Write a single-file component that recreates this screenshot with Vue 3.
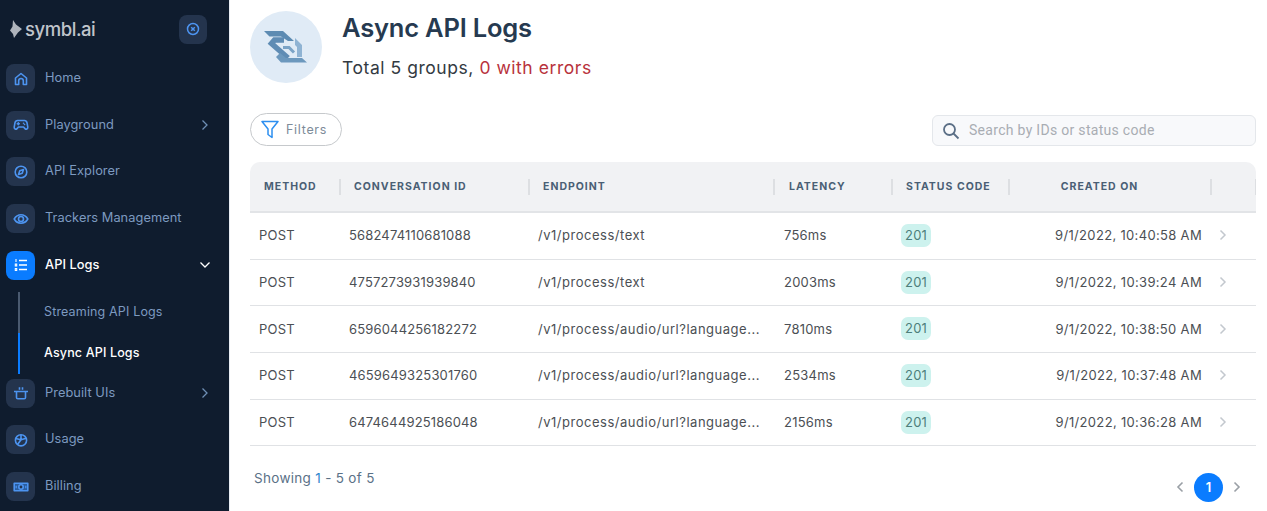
<script setup>
const nav1 = [
  { label: 'Home', icon: 'home' },
  { label: 'Playground', icon: 'game', chevron: true },
  { label: 'API Explorer', icon: 'compass' },
  { label: 'Trackers Management', icon: 'eye' }
]
const nav2 = [
  { label: 'Prebuilt UIs', icon: 'pot', chevron: true },
  { label: 'Usage', icon: 'pie' },
  { label: 'Billing', icon: 'money' }
]
const cols = ['METHOD', 'CONVERSATION ID', 'ENDPOINT', 'LATENCY', 'STATUS CODE', 'CREATED ON', '']
const longEp = '/v1/process/audio/url?language...'
const rows = [
  ['5682474110681088', '/v1/process/text', '756ms', '9/1/2022, 10:40:58 AM'],
  ['4757273931939840', '/v1/process/text', '2003ms', '9/1/2022, 10:39:24 AM'],
  ['6596044256182272', longEp, '7810ms', '9/1/2022, 10:38:50 AM'],
  ['4659649325301760', longEp, '2534ms', '9/1/2022, 10:37:48 AM'],
  ['6474644925186048', longEp, '2156ms', '9/1/2022, 10:36:28 AM']
]
</script>

<template>
  <div class="app">
    <aside class="side">
      <div class="brand">
        <div class="logo">
          <svg width="12" height="18" viewBox="0 0 12 18"><path d="M3 0 L6 4.500 L12 9 L8 12.500 L4 18 L3 14 L0 10.500 L2.500 6.500 Z" fill="#aeb3bb"/></svg>
          <span>symbl.ai</span>
        </div>
        <button class="collapse" aria-label="Collapse">
          <svg width="14" height="14" viewBox="0 0 14 14" fill="none" stroke="#4d94f0" stroke-width="1.500"><circle cx="7" cy="7" r="5.500"/><path d="M5.200 5.200l3.600 3.600M8.800 5.200L5.200 8.800"/></svg>
        </button>
      </div>

      <nav class="nav">
        <div v-for="n in nav1" :key="n.label" class="item">
          <span class="ibox">
            <svg width="16" height="16" viewBox="0 0 16 16" fill="none" stroke="#4d94f0" stroke-width="1.600" stroke-linejoin="round" stroke-linecap="round">
              <template v-if="n.icon === 'home'"><path d="M2.500 7L8 2.500 13.500 7v6.500h-3.200V9.800a2.300 2.300 0 0 0-4.600 0v3.700H2.500z"/></template>
              <template v-if="n.icon === 'game'"><path d="M4.500 3.500h7c1.500 0 2.200 1 2.500 2.200l.8 4.500c.3 1.700-1.700 2.600-2.800 1.400L10.500 10h-5L4 11.600c-1.100 1.200-3.100.3-2.800-1.400L2 5.700c.3-1.200 1-2.200 2.500-2.200z"/><path d="M5.300 5.800v2M4.300 6.800h2M10.500 6.300h.1M11.500 7.500h.1"/></template>
              <template v-if="n.icon === 'compass'"><circle cx="8" cy="8" r="5.800"/><path d="M10.500 5.500L9.200 9.200 5.500 10.500 6.800 6.800z"/></template>
              <template v-if="n.icon === 'eye'"><path d="M1.200 8C2.800 5.200 5.200 3.800 8 3.800s5.200 1.400 6.800 4.200c-1.600 2.800-4 4.200-6.800 4.200S2.800 10.800 1.200 8z"/><circle cx="8" cy="8" r="2.500"/></template>
            </svg>
          </span>
          <span class="lbl">{{ n.label }}</span>
          <svg v-if="n.chevron" class="chev" width="8" height="12" viewBox="0 0 8 12" fill="none" stroke="#6f8fb5" stroke-width="1.300"><path d="M1.500 1.500L6 6l-4.500 4.500"/></svg>
        </div>

        <div class="item active">
          <span class="ibox">
            <svg width="16" height="16" viewBox="0 0 16 16" fill="none" stroke="#fff" stroke-width="1.500"><path d="M6 3.500h8M6 8h8M6 12.500h8"/><path d="M3 2v3M2.300 7h1.400v2H2.300zM2.300 11.500h1.400v2H2.300z" stroke-width="1.100"/></svg>
          </span>
          <span class="lbl">API Logs</span>
          <svg class="chev down" width="12" height="8" viewBox="0 0 12 8" fill="none" stroke="#fff" stroke-width="1.300"><path d="M1.500 1.500L6 6l4.500-4.500"/></svg>
        </div>

        <div class="sub">
          <div class="subitem">Streaming API Logs</div>
          <div class="subitem on">Async API Logs</div>
        </div>

        <div v-for="n in nav2" :key="n.label" class="item">
          <span class="ibox">
            <svg width="16" height="16" viewBox="0 0 16 16" fill="none" stroke="#4d94f0" stroke-width="1.600" stroke-linejoin="round">
              <template v-if="n.icon === 'pot'"><path d="M3.500 6.500h9v6c0 .8-.5 1.300-1.300 1.300H4.800c-.8 0-1.300-.5-1.300-1.300zM1 6.500h14M6.500 2.200v2.500M9.500 2.200v2.500"/></template>
              <template v-if="n.icon === 'pie'"><circle cx="8" cy="8.300" r="5.600"/><path d="M8 2.700v5l5.200-1.500M8 7.700L4.500 12.500M8 7.700L2.700 6.500"/></template>
              <template v-if="n.icon === 'money'"><rect x="1.200" y="4.300" width="13.600" height="7.400" fill="#2a5d9e"/><circle cx="8" cy="8" r="2.200" fill="#24344d"/><path d="M3.200 6.800v2.400M12.800 6.800v2.400" stroke-width="1.200"/></template>
            </svg>
          </span>
          <span class="lbl">{{ n.label }}</span>
          <svg v-if="n.chevron" class="chev" width="8" height="12" viewBox="0 0 8 12" fill="none" stroke="#6f8fb5" stroke-width="1.300"><path d="M1.500 1.500L6 6l-4.500 4.500"/></svg>
        </div>
      </nav>
    </aside>

    <main class="main">
      <header class="head">
        <div class="disc">
          <svg width="72" height="72" viewBox="0 0 72 72" fill="none">
            <polygon points="14,20 33,20 44,30 38,30 31,25.500 19.500,25.500" fill="#5d8bb2"/>
            <path d="M34 29H24.500L21.500 32.500 38 47" stroke="#5f8cb4" stroke-width="5.500"/>
            <path d="M33 36.500h6l5 5" stroke="#7ba3c6" stroke-width="3"/>
            <polygon points="45,27 52,34 52,46 47,46 47,36 45,34" fill="#8fb3d3"/>
            <polygon points="26,46 31,51.500 57,51.500 52,47 36,47 30,42" fill="#6c98bd"/>
          </svg>
        </div>
        <div class="htext">
          <h1>Async API Logs</h1>
          <p>Total 5 groups, <span class="err">0 with errors</span></p>
        </div>
      </header>

      <div class="tools">
        <button class="filter">
          <svg width="18" height="19" viewBox="0 0 18 19" fill="none" stroke="#2d8ff0" stroke-width="1.500" stroke-linejoin="round"><path d="M1 1.500h16l-6 7.500v8.500l-4-3V9z"/></svg>
          <span>Filters</span>
        </button>
        <div class="search">
          <svg width="18" height="18" viewBox="0 0 18 18" fill="none" stroke="#5b6f86" stroke-width="1.800"><circle cx="7.500" cy="7.500" r="5.500"/><path d="M11.500 11.500L16.500 16.500"/></svg>
          <input placeholder="Search by IDs or status code" />
        </div>
      </div>

      <div class="table">
        <div class="thead">
          <div v-for="(c, i) in cols" :key="i" class="th" :class="'c' + i"><span>{{ c }}</span></div>
        </div>
        <div v-for="r in rows" :key="r[0]" class="tr">
          <div class="td c0">POST</div>
          <div class="td c1">{{ r[0] }}</div>
          <div class="td c2">{{ r[1] }}</div>
          <div class="td c3">{{ r[2] }}</div>
          <div class="td c4"><span class="badge">201</span></div>
          <div class="td c5">{{ r[3] }}</div>
          <div class="td c6">
            <svg width="8" height="12" viewBox="0 0 8 12" fill="none" stroke="#c3c8ce" stroke-width="1.500"><path d="M1.500 1.500L6 6l-4.500 4.500"/></svg>
          </div>
        </div>
      </div>

      <footer class="foot">
        <div class="showing">Showing <span class="blue">1</span> - 5 of 5</div>
        <div class="pager">
          <svg width="8" height="12" viewBox="0 0 8 12" fill="none" stroke="#9aa0a6" stroke-width="1.600"><path d="M6.500 1.500L2 6l4.500 4.500"/></svg>
          <span class="page">1</span>
          <svg width="8" height="12" viewBox="0 0 8 12" fill="none" stroke="#9aa0a6" stroke-width="1.600"><path d="M1.500 1.500L6 6l-4.500 4.500"/></svg>
        </div>
      </footer>
    </main>
  </div>
</template>

<style>
html, body { margin: 0; background: #fff; overflow: hidden; }
</style>

<style scoped>
.app { display: flex; height: 511px; overflow: hidden; font-family: Inter, "Liberation Sans", sans-serif; }
.side { width: 229px; flex: none; background: #0f1c2e; border-right: 1px solid #e8edf3; box-sizing: content-box; }
.brand { display: flex; align-items: center; justify-content: space-between; height: 64px; padding: 0 22px 6px 10px; box-sizing: border-box; }
.logo { display: flex; align-items: center; gap: 3px; color: #c0c4cb; font-size: 18.500px; font-weight: 500; letter-spacing: -.45px; }
.collapse { width: 28px; height: 29px; border: 0; border-radius: 8px; background: #24344d; display: flex; align-items: center; justify-content: center; padding: 0; }
.nav { display: flex; flex-direction: column; }
.item { height: 46.700px; display: flex; align-items: flex-start; padding-left: 6px; position: relative; }
.ibox { width: 29px; height: 29px; border-radius: 8px; background: #24344d; display: flex; align-items: center; justify-content: center; flex: none; }
.lbl { margin-left: 10px; line-height: 27px; font-size: 12.800px; letter-spacing: .06px; color: #7d9ac0; }
.chev { position: absolute; left: 201px; top: 8px; }
.chev.down { left: 199px; top: 10px; }
.item.active .ibox { background: #0a7cff; }
.item.active .lbl { color: #fff; font-weight: 500; }
.sub { height: 81.300px; margin-top: -5px; margin-bottom: 5px; position: relative; }
.subitem { height: 41px; border-left: 2px solid #4a5a70; margin-left: 18px; padding-left: 24px; line-height: 40px; font-size: 12.500px; letter-spacing: .15px; color: #7d9ac0; box-sizing: border-box; }
.subitem.on { color: #fff; border-left-color: #0a7cff; font-weight: 500; }

.main { flex: 1; min-width: 0; padding: 11px 11px 0 20px; }
.head { display: flex; gap: 20px; height: 72px; }
.disc { width: 72px; height: 72px; border-radius: 50%; background: #e0ebf6; }
.disc svg { display: block; }
h1 { margin: 0; font-size: 25.500px; line-height: 34px; font-weight: 600; color: #263a50; letter-spacing: -.2px; }
.htext p { margin: 10px 0 0; font-size: 17.500px; line-height: 26px; letter-spacing: .55px; color: #333a42; }
.err { color: #b8323c; }

.tools { display: flex; justify-content: space-between; align-items: flex-end; margin-top: 30px; height: 33px; }
.filter { width: 92px; height: 33px; border: 1px solid #c6c9cc; border-radius: 17px; background: #fff; display: flex; align-items: center; gap: 7px; padding: 0 0 0 10px; box-sizing: border-box; font: inherit; }
.filter span { font-size: 12.500px; letter-spacing: .7px; color: #7d8b99; }
.search { width: 324px; height: 31px; box-sizing: border-box; border: 1px solid #e4e7eb; border-radius: 6px; background: #f8f9fb; display: flex; align-items: center; padding-left: 9px; gap: 9px; }
.search input { flex: 1; min-width: 0; border: 0; background: transparent; outline: 0; padding: 0 0 2px; font-family: Roboto, sans-serif; font-size: 14px; letter-spacing: .3px; }
.search input::placeholder { color: #a9adb3; opacity: 1; }

.table { margin-top: 16px; }
.thead, .tr { display: grid; grid-template-columns: 90px 189px 245px 118px 117px 202px 45px; }
.thead { height: 51px; background: #f1f2f4; border-radius: 10px 10px 0 0; border-bottom: 2px solid #e2e4e7; box-sizing: border-box; align-items: center; }
.th { height: 16px; display: flex; align-items: center; padding-left: 14px; margin-right: -1px; border-right: 2px solid #dddfe2; box-sizing: border-box; font-size: 10.500px; font-weight: 700; letter-spacing: 1px; color: #4a5f75; white-space: nowrap; }
.th.c3 { padding-left: 15px; }
.th.c5 { justify-content: center; padding: 0 20px 0 0; }
.th.c6 { border-right-width: 1px; margin-right: 0; }
.tr { height: 46.700px; border-bottom: 1px solid #e0e2e5; box-sizing: border-box; align-items: center; }
.td { padding-left: 9px; font-size: 13px; letter-spacing: .22px; color: #4b4f54; white-space: nowrap; margin-top: -1px; }
.td.c1 { letter-spacing: .16px; }
.td.c2 { letter-spacing: .52px; }
.td.c3 { padding-left: 10px; }
.td.c5 { text-align: right; padding: 0 9px 0 0; letter-spacing: .33px; }
.td.c6 { padding-left: 8px; display: flex; }
.badge { display: inline-block; padding: 0 4px; height: 23px; line-height: 23px; border-radius: 7px; background: #cdf2ee; color: #4d7f7b; }

.foot { display: flex; justify-content: space-between; margin-top: 14.500px; }
.showing { padding-left: 4px; font-size: 13.500px; letter-spacing: .3px; line-height: 35px; color: #5a7187; }
.blue { color: #2f86cc; }
.pager { display: flex; align-items: center; gap: 10px; margin-top: 12px; padding-right: 15px; }
.page { width: 29px; height: 29px; border-radius: 50%; background: #0a7cff; color: #fff; font-size: 13px; font-weight: 600; display: flex; align-items: center; justify-content: center; }
</style>
